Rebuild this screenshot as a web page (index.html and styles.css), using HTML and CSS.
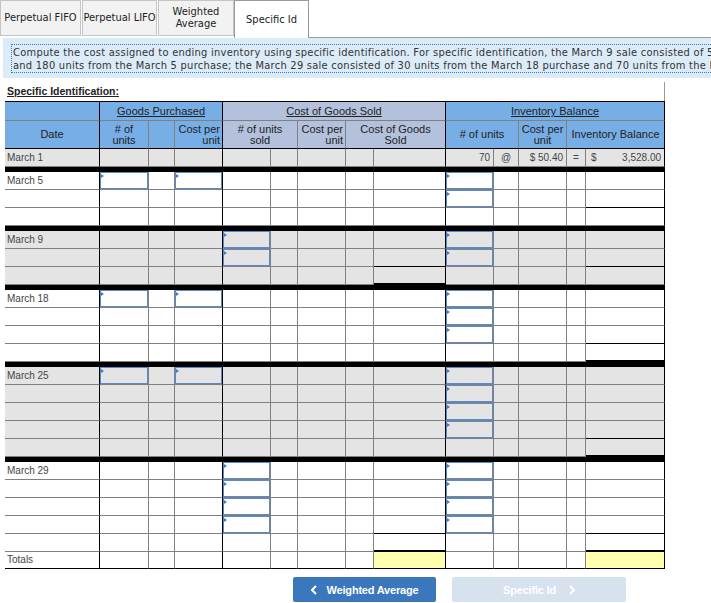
FILE: index.html
```html
<!DOCTYPE html>
<html>
<head>
<meta charset="utf-8">
<title>Specific Id</title>
<link rel="stylesheet" href="styles.css">
</head>
<body>
<div class="tabs">
  <div class="tab t1">Perpetual FIFO</div>
  <div class="tab t2">Perpetual LIFO</div>
  <div class="tab t3">Weighted<br>Average</div>
  <div class="tab active">Specific Id</div>
  <div class="fill"></div>
</div>
<div class="note">
  <div class="note-text">Compute the cost assigned to ending inventory using specific identification. For specific identification, the March 9 sale consisted of 50 units from beginning inventory<br>and 180 units from the March 5 purchase; the March 29 sale consisted of 30 units from the March 18 purchase and 70 units from the March 25 purchase.</div>
</div>
<div class="sheet">
  <div class="lbl"><u>Specific Identification:</u></div>
  <table class="ws">
    <colgroup>
      <col class="c1"><col class="c2"><col class="c3"><col class="c4"><col class="c5"><col class="c6"><col class="c7"><col class="c8"><col class="c9"><col class="c10"><col class="c11"><col class="c12"><col class="c13"><col class="c14">
    </colgroup>
    <thead>
      <tr class="h1">
        <th class="k"></th>
        <th colspan="3" class="k"><u>Goods Purchased</u></th>
        <th colspan="5" class="cg k"><u>Cost of Goods Sold</u></th>
        <th colspan="5" class="k"><u>Inventory Balance</u></th>
      </tr>
      <tr class="h2">
        <th class="k">Date</th>
        <th># of<br>units</th>
        <th></th>
        <th class="k rt">Cost per<br>unit</th>
        <th colspan="2" class="cg"># of units<br>sold</th>
        <th class="cg rt">Cost per<br>unit</th>
        <th colspan="2" class="cg k">Cost of Goods<br>Sold</th>
        <th colspan="2"># of units</th>
        <th>Cost per<br>unit</th>
        <th colspan="2" class="k">Inventory Balance</th>
      </tr>
    </thead>
    <tbody class="g">
      <tr><td class="d">March 1</td><td></td><td></td><td></td><td></td><td></td><td></td><td></td><td></td><td class="r">70</td><td class="c">@</td><td class="r">$ 50.40</td><td class="c">=</td><td><div class="bal"><span>$</span><span>3,528.00</span></div></td></tr>
      <tr class="sep"><td colspan="14"></td></tr>
    </tbody>
    <tbody>
      <tr><td class="d">March 5</td><td class="i"><div class="in"></div></td><td></td><td class="i"><div class="in"></div></td><td></td><td></td><td></td><td></td><td></td><td class="i"><div class="in"></div></td><td></td><td></td><td></td><td></td></tr>
      <tr><td></td><td></td><td></td><td></td><td></td><td></td><td></td><td></td><td></td><td class="i"><div class="in"></div></td><td></td><td></td><td></td><td class="kb"></td></tr>
      <tr><td></td><td></td><td></td><td></td><td></td><td></td><td></td><td></td><td></td><td></td><td></td><td></td><td></td><td></td></tr>
      <tr class="sep"><td colspan="14"></td></tr>
    </tbody>
    <tbody class="g">
      <tr><td class="d">March 9</td><td></td><td></td><td></td><td class="i"><div class="in"></div></td><td></td><td></td><td></td><td></td><td class="i"><div class="in"></div></td><td></td><td></td><td></td><td></td></tr>
      <tr><td></td><td></td><td></td><td></td><td class="i"><div class="in"></div></td><td></td><td></td><td></td><td class="kb"></td><td class="i"><div class="in"></div></td><td></td><td></td><td></td><td class="kb"></td></tr>
      <tr><td></td><td></td><td></td><td></td><td></td><td></td><td></td><td></td><td class="tk"></td><td></td><td></td><td></td><td></td><td></td></tr>
      <tr class="sep"><td colspan="14"></td></tr>
    </tbody>
    <tbody>
      <tr><td class="d">March 18</td><td class="i"><div class="in"></div></td><td></td><td class="i"><div class="in"></div></td><td></td><td></td><td></td><td></td><td></td><td class="i"><div class="in"></div></td><td></td><td></td><td></td><td></td></tr>
      <tr><td></td><td></td><td></td><td></td><td></td><td></td><td></td><td></td><td></td><td class="i"><div class="in"></div></td><td></td><td></td><td></td><td></td></tr>
      <tr><td></td><td></td><td></td><td></td><td></td><td></td><td></td><td></td><td></td><td class="i"><div class="in"></div></td><td></td><td></td><td></td><td class="kb"></td></tr>
      <tr><td></td><td></td><td></td><td></td><td></td><td></td><td></td><td></td><td></td><td></td><td></td><td></td><td></td><td class="tk"></td></tr>
      <tr class="sep"><td colspan="14"></td></tr>
    </tbody>
    <tbody class="g">
      <tr><td class="d">March 25</td><td class="i"><div class="in"></div></td><td></td><td class="i"><div class="in"></div></td><td></td><td></td><td></td><td></td><td></td><td class="i"><div class="in"></div></td><td></td><td></td><td></td><td></td></tr>
      <tr><td></td><td></td><td></td><td></td><td></td><td></td><td></td><td></td><td></td><td class="i"><div class="in"></div></td><td></td><td></td><td></td><td></td></tr>
      <tr><td></td><td></td><td></td><td></td><td></td><td></td><td></td><td></td><td></td><td class="i"><div class="in"></div></td><td></td><td></td><td></td><td></td></tr>
      <tr><td></td><td></td><td></td><td></td><td></td><td></td><td></td><td></td><td></td><td class="i"><div class="in"></div></td><td></td><td></td><td></td><td class="kb"></td></tr>
      <tr><td></td><td></td><td></td><td></td><td></td><td></td><td></td><td></td><td></td><td></td><td></td><td></td><td></td><td class="tk"></td></tr>
      <tr class="sep"><td colspan="14"></td></tr>
    </tbody>
    <tbody>
      <tr><td class="d">March 29</td><td></td><td></td><td></td><td class="i"><div class="in"></div></td><td></td><td></td><td></td><td></td><td class="i"><div class="in"></div></td><td></td><td></td><td></td><td></td></tr>
      <tr><td></td><td></td><td></td><td></td><td class="i"><div class="in"></div></td><td></td><td></td><td></td><td></td><td class="i"><div class="in"></div></td><td></td><td></td><td></td><td></td></tr>
      <tr><td></td><td></td><td></td><td></td><td class="i"><div class="in"></div></td><td></td><td></td><td></td><td></td><td class="i"><div class="in"></div></td><td></td><td></td><td></td><td></td></tr>
      <tr><td></td><td></td><td></td><td></td><td class="i"><div class="in"></div></td><td></td><td></td><td></td><td class="kb"></td><td class="i"><div class="in"></div></td><td></td><td></td><td></td><td class="kb"></td></tr>
      <tr><td></td><td></td><td></td><td></td><td></td><td></td><td></td><td></td><td class="tk"></td><td></td><td></td><td></td><td></td><td class="tk"></td></tr>
      <tr class="tot"><td class="d">Totals</td><td></td><td></td><td></td><td></td><td></td><td></td><td></td><td class="y"></td><td></td><td></td><td></td><td></td><td class="y"></td></tr>
    </tbody>
  </table>
</div>
<div class="nav">
  <div class="btn back">
    <svg width="6" height="10" viewBox="0 0 6 10"><polyline points="5,1 1,5 5,9" fill="none" stroke="#fff" stroke-width="2"/></svg>
    <span>Weighted Average</span>
  </div>
  <div class="btn next">
    <span>Specific Id</span>
    <svg width="6" height="10" viewBox="0 0 6 10"><polyline points="1,1 5,5 1,9" fill="none" stroke="#fff" stroke-width="2"/></svg>
  </div>
</div>
</body>
</html>
```

FILE: styles.css
```css
html, body {
  margin: 0;
  padding: 0;
  background: #fff;
  overflow: hidden;
}

body {
  font-family: "DejaVu Sans Condensed", "DejaVu Sans", sans-serif;
  color: #222;
}

/* Tabs */
.tabs {
  display: flex;
  align-items: flex-start;
  height: 38px;
}

.tab {
  box-sizing: border-box;
  height: 36px;
  display: flex;
  align-items: center;
  justify-content: center;
  text-align: center;
  font-size: 11px;
  line-height: 12px;
  color: #222;
  background: #f2f2f2;
  border: 1px solid #c4c4c4;
}

.t1 { width: 81px; margin-right: 1px; }
.t2 { width: 75px; margin-right: 1px; }
.t3 { width: 76px; }

.tab.active {
  width: 75px;
  height: 38px;
  background: #fff;
  border: 1px solid #9a9a9a;
  border-bottom: 0;
}

.fill {
  flex: 1;
  align-self: stretch;
  border-bottom: 1px solid #999;
}

/* Instruction box */
.note {
  margin-left: 3px;
  background: #dcebf8;
  padding: 6px 0 5px 8px;
  white-space: nowrap;
  overflow: hidden;
}

.note-text {
  display: inline-block;
  border: 1px dotted #3b78c2;
  padding: 1px 0 0 1px;
  font-size: 11px;
  line-height: 13px;
  letter-spacing: 0.26px;
  color: #333;
}

/* Sheet */
.sheet {
  margin-left: 5px;
  width: 660px;
}

.lbl {
  box-sizing: border-box;
  margin-top: 4px;
  height: 19px;
  border-right: 1px solid #999;
  padding: 3px 0 0 2px;
  font-family: "Liberation Sans", Arial, sans-serif;
  font-weight: bold;
  font-size: 10.5px;
  line-height: 12px;
  color: #222;
}

.ws {
  border-collapse: separate;
  border-spacing: 0;
  table-layout: fixed;
  width: 660px;
  border-top: 1px solid #000;
  font-family: "Liberation Sans", Arial, sans-serif;
  color: #444;
}

.c1 { width: 95px; }
.c2 { width: 49px; }
.c3 { width: 26px; }
.c4 { width: 48px; }
.c5 { width: 48px; }
.c6 { width: 27px; }
.c7 { width: 48px; }
.c8 { width: 28px; }
.c9 { width: 72px; }
.c10 { width: 48px; }
.c11 { width: 25px; }
.c12 { width: 48px; }
.c13 { width: 19px; }
.c14 { width: 79px; }

.ws td,
.ws th {
  border-right: 1px solid #808080;
  border-bottom: 1px solid #808080;
  padding: 0 3px;
  font-weight: normal;
  white-space: nowrap;
  overflow: hidden;
}

.ws thead th {
  background: #78aee6;
  color: #222;
  font-size: 11px;
  padding: 0 2px;
}

.ws thead th.cg { background: #b3c1dc; }
.ws thead th.k { border-right-color: #000; }
.ws thead th.rt { text-align: right; }

.ws .h1 th {
  height: 18px;
  line-height: 12px;
}

.ws .h2 th {
  height: 27px;
  line-height: 11px;
  border-bottom-color: #000;
}

.ws tbody td {
  height: 17px;
  font-size: 10px;
  line-height: 12px;
}

.ws tbody td:nth-child(1),
.ws tbody td:nth-child(4),
.ws tbody td:nth-child(9),
.ws tbody td:nth-child(14) {
  border-right-color: #000;
}

.ws tbody.g td { background: #e4e4e4; }

.ws td.d { padding-left: 2px; }
.ws td.r { text-align: right; }
.ws td.c { text-align: center; padding: 0; }

.bal {
  display: flex;
  justify-content: space-between;
  padding-left: 2px;
}

.ws td.i { padding: 0; }

.in {
  position: relative;
  box-sizing: border-box;
  height: 17px;
  border: 1px solid #5a8ac8;
}

.in::before {
  content: "";
  position: absolute;
  left: 0;
  top: 1px;
  border-left: 3px solid #3a7bd5;
  border-top: 2px solid transparent;
  border-bottom: 2px solid transparent;
}

.ws td.kb { border-bottom-color: #000; }

.ws td.tk {
  border-bottom-color: #000;
  box-shadow: inset 0 -1px 0 #000;
}

.ws tr.tot td {
  height: 16px;
  border-bottom-color: #000;
}

.ws td.y { background: #ffffb0; }

.ws tr.sep td {
  height: 5px;
  padding: 0;
  border: 0;
  background: #000;
}

/* Navigation */
.nav {
  display: flex;
  gap: 16px;
  margin: 8px 0 0 293px;
}

.btn {
  box-sizing: border-box;
  height: 25px;
  border-radius: 2px;
  display: flex;
  align-items: center;
  justify-content: center;
  font-family: "Liberation Sans", Arial, sans-serif;
  font-weight: bold;
  font-size: 11px;
  letter-spacing: -0.2px;
  color: #fff;
}

.btn.back {
  width: 143px;
  gap: 10px;
  background: #3b77bd;
}

.btn.next {
  width: 174px;
  gap: 13px;
  background: #d7e2ef;
}
```
